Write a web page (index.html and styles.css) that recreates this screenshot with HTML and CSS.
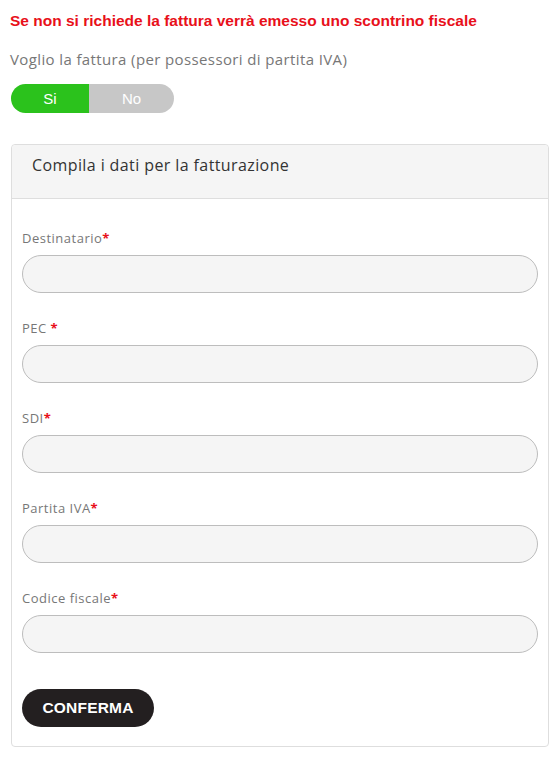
FILE: index.html
```html
<!DOCTYPE html>
<html lang="it">
<head>
<meta charset="utf-8">
<link rel="stylesheet" href="styles.css">
</head>
<body>
<div class="page">
  <p class="notice">Se non si richiede la fattura verrà emesso uno scontrino fiscale</p>
  <p class="question">Voglio la fattura (per possessori di partita IVA)</p>
  <div class="toggle">
    <span class="opt on">Si</span>
    <span class="opt off">No</span>
  </div>
  <div class="card">
    <div class="card-head">Compila i dati per la fatturazione</div>
    <div class="card-body">
      <div class="field">
        <label class="lbl">Destinatario<span class="req">*</span></label>
        <input class="inp" type="text">
      </div>
      <div class="field">
        <label class="lbl">PEC <span class="req">*</span></label>
        <input class="inp" type="text">
      </div>
      <div class="field">
        <label class="lbl">SDI<span class="req">*</span></label>
        <input class="inp" type="text">
      </div>
      <div class="field">
        <label class="lbl">Partita IVA<span class="req">*</span></label>
        <input class="inp" type="text">
      </div>
      <div class="field">
        <label class="lbl">Codice fiscale<span class="req">*</span></label>
        <input class="inp" type="text">
      </div>
      <button class="btn">CONFERMA</button>
    </div>
  </div>
</div>
</body>
</html>
```
FILE: styles.css
```css
* { box-sizing: border-box; }
html, body { margin: 0; padding: 0; background: #fff; }
body { font-family: "Open Sans", "Liberation Sans", sans-serif; }
.page { padding: 0 10px 0 10px; }
.notice {
  margin: 0;
  padding-top: 12px;
  font-family: "Liberation Sans", Arial, sans-serif;
  font-weight: bold;
  font-size: 15.5px;
  line-height: 18px;
  color: #e8101a;
}
.question {
  margin: 0;
  padding-top: 20px;
  font-size: 15px;
  letter-spacing: 0.38px;
  line-height: 18px;
  color: #777;
}
.toggle {
  display: flex;
  width: 163px;
  height: 29px;
  margin: 16px 0 0 1px;
  border-radius: 15px;
  overflow: hidden;
  font-family: "Liberation Sans", Arial, sans-serif;
  font-size: 15px;
  color: #fff;
}
.opt { display: flex; align-items: center; justify-content: center; }
.opt.on { width: 78px; background: #2bc21c; }
.opt.off { flex: 1; background: #c7c7c7; }
.card {
  margin: 31px 0 0 1px;
  width: 538px;
  height: 603px;
  border: 1px solid #dedede;
  border-radius: 4px;
}
.card-head {
  height: 54px;
  padding: 9px 0 0 20px;
  background: #f5f5f5;
  border-bottom: 1px solid #dedede;
  border-radius: 4px 4px 0 0;
  font-size: 16px;
  letter-spacing: 0.4px;
  line-height: 22px;
  color: #333;
}
.card-body { padding: 30px 10px 0 10px; }
.field { display: flex; flex-direction: column; height: 90px; }
.lbl {
  font-size: 13px;
  letter-spacing: 0.5px;
  line-height: 18px;
  color: #777;
}
.req { color: #e8101a; font-weight: bold; letter-spacing: 0; }
.inp {
  margin-top: 8px;
  width: 516px;
  height: 38px;
  border: 1px solid #bdbdbd;
  border-radius: 19px;
  background: #f5f5f5;
  outline: none;
}
.btn {
  margin-top: 10px;
  width: 132px;
  height: 38px;
  border: none;
  border-radius: 19px;
  background: #231f20;
  color: #fff;
  font-family: "Liberation Sans", Arial, sans-serif;
  font-weight: 900;
  font-size: 15.5px;
  letter-spacing: 0.2px;
}
```
